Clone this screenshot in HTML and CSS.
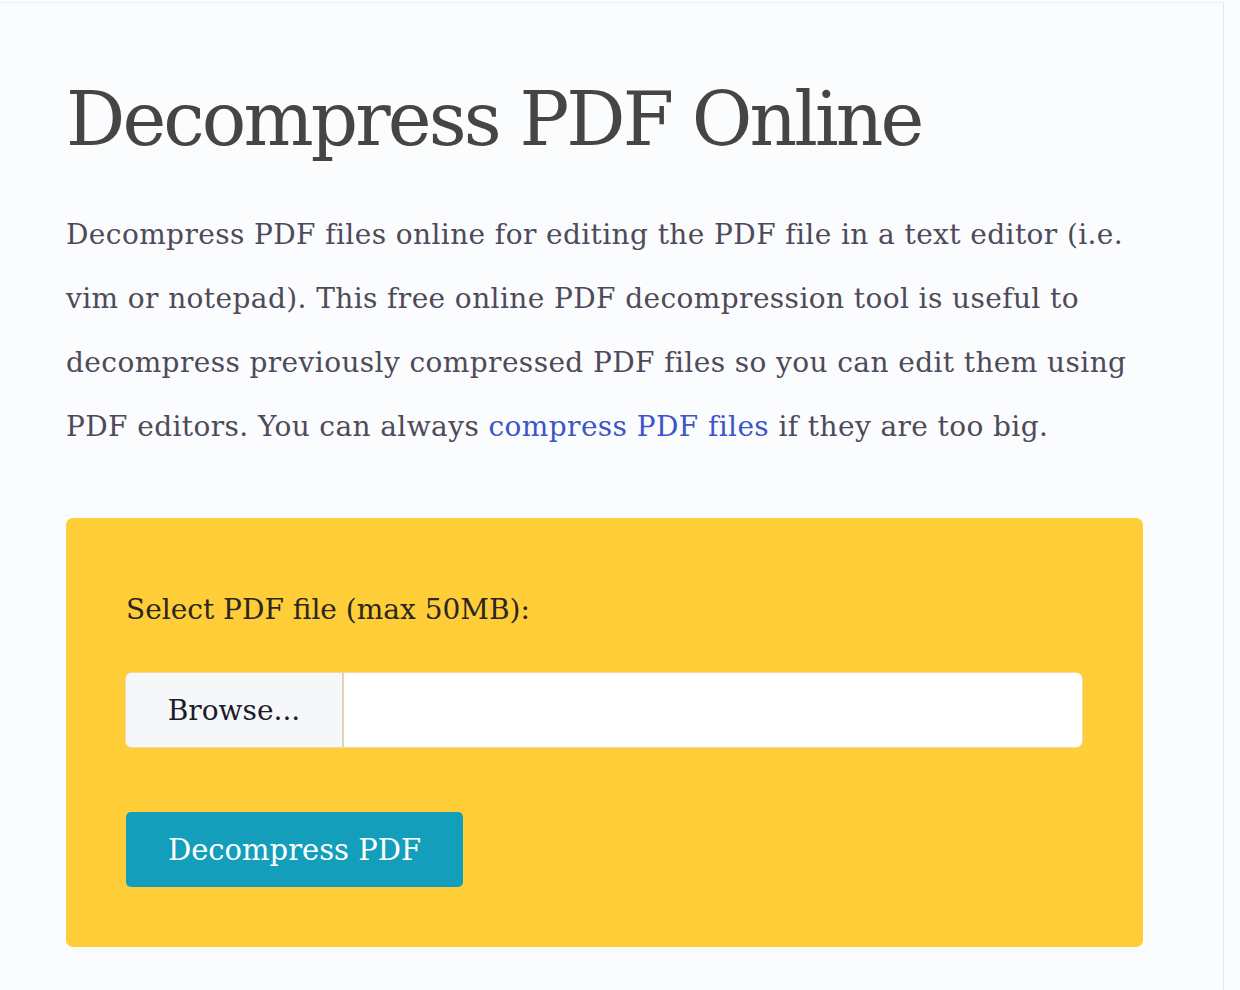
FILE: index.html
```html
<!DOCTYPE html>
<html lang="en">
<head>
<meta charset="utf-8">
<title>Decompress PDF Online</title>
<link rel="stylesheet" href="styles.css">
</head>
<body>
<div class="page">
  <main class="content">
    <h1 class="title">Decompress PDF Online</h1>
    <p class="intro">Decompress PDF files online for editing the PDF file in a text editor (i.e.<br>vim or notepad). This free online PDF decompression tool is useful to<br>decompress previously compressed PDF files so you can edit them using<br>PDF editors. You can always <a class="link" href="#">compress PDF files</a> if they are too big.</p>
    <form class="panel">
      <label class="label" for="file">Select PDF file (max 50MB):</label>
      <div class="file">
        <span class="browse">Browse...</span>
        <span class="filename"></span>
      </div>
      <button class="submit" type="button">Decompress PDF</button>
    </form>
  </main>
</div>
</body>
</html>
```
FILE: styles.css
```css
html, body {
  margin: 0;
  padding: 0;
  background: #fbfcfd;
}
body {
  font-family: "DejaVu Serif", "Liberation Serif", serif;
  color: #4a4553;
}
.page {
  width: 1224px;
  height: 990px;
  margin-top: 2px;
  border-top: 1px solid #eceef1;
  border-right: 1px solid #e4e7eb;
  box-sizing: border-box;
}
.content {
  padding: 0 0 0 66px;
  width: 1077px;
}
.title {
  margin: 0;
  padding-top: 66px;
  font-size: 74px;
  font-weight: 400;
  line-height: 100px;
  color: #454545;
  letter-spacing: -2.9px;
}
.intro {
  margin: 34px 0 0 0;
  font-size: 28px;
  line-height: 64px;
  color: #4e4a5a;
  letter-spacing: 0.4px;
  white-space: nowrap;
}
.link {
  color: #3d55c9;
  text-decoration: none;
}
.panel {
  margin-top: 59px;
  background: #fecd38;
  border-radius: 7px;
  padding: 72px 60px 60px 60px;
  display: flex;
  flex-direction: column;
  align-items: flex-start;
}
.label {
  font-size: 28px;
  color: #2a2620;
  line-height: 40px;
}
.file {
  margin-top: 43px;
  width: 956px;
  height: 74px;
  display: flex;
  background: #fff;
  border-radius: 6px;
  overflow: hidden;
  box-shadow: 0 0 0 1px #f3d9a0;
}
.browse {
  width: 216px;
  background: #f6f7f9;
  border-right: 2px solid #e2d2b4;
  display: flex;
  align-items: center;
  justify-content: center;
  font-size: 28px;
  color: #1d1a2a;
}
.filename {
  flex: 1;
}
.submit {
  margin-top: 65px;
  width: 337px;
  height: 75px;
  background: #139fbb;
  border: none;
  border-radius: 5px;
  color: #ffffff;
  font-family: "DejaVu Serif", "Liberation Serif", serif;
  font-size: 29px;
  padding: 0;
}
```
